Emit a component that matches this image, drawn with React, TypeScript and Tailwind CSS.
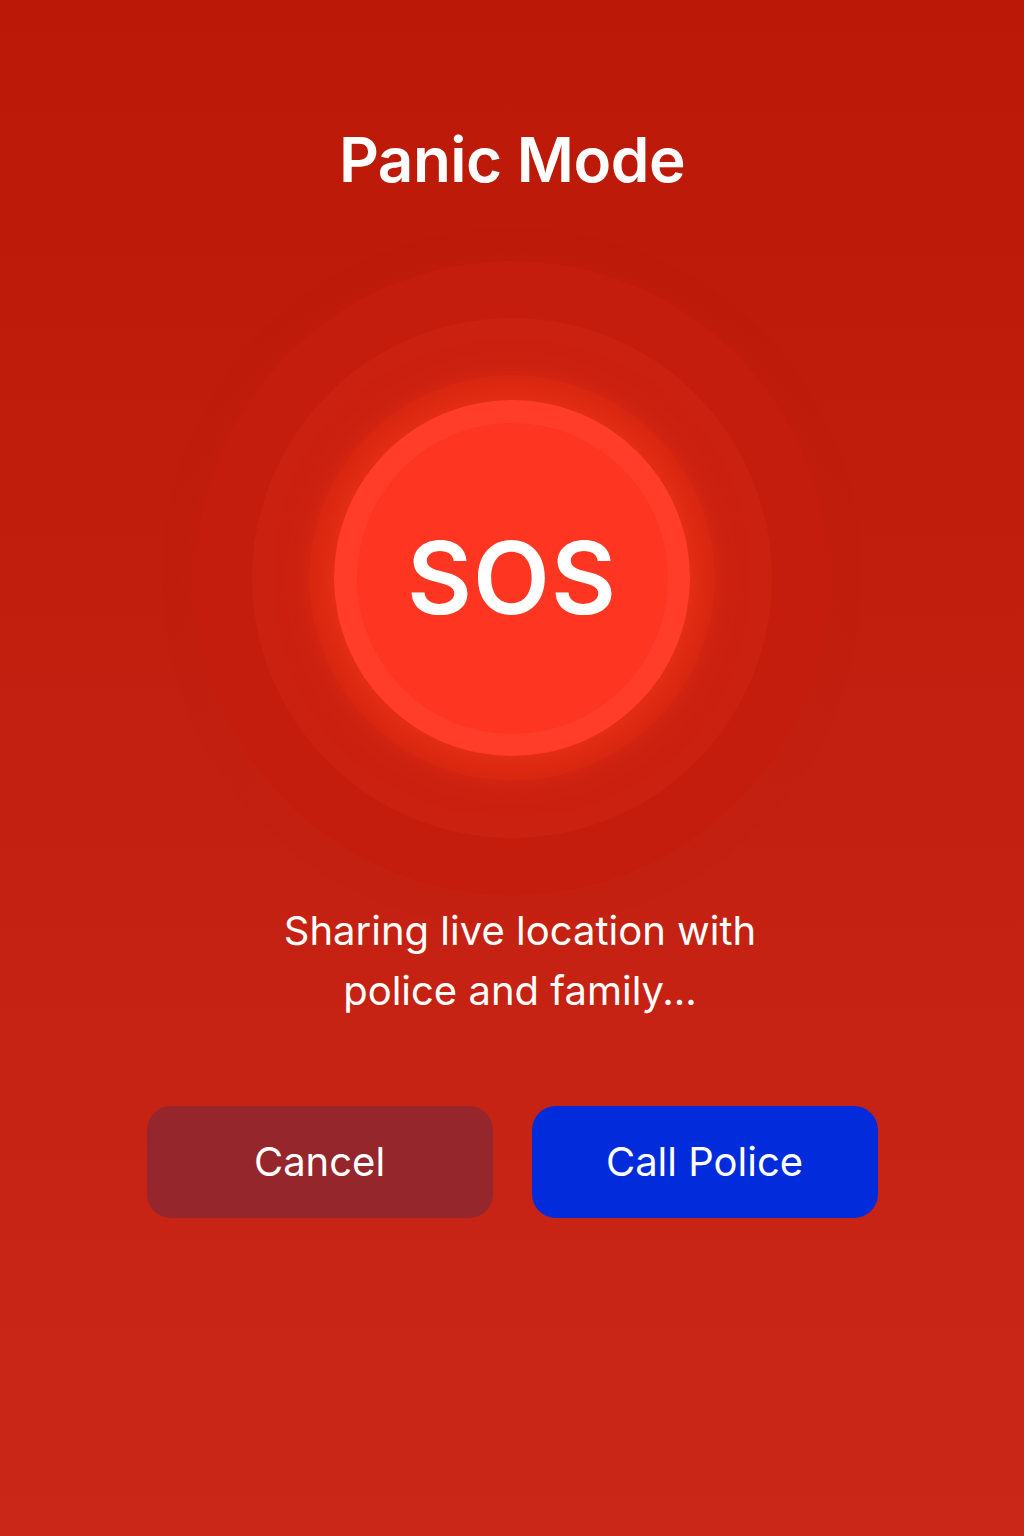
export default function App() {
  return (
    <div
      className="min-h-[1536px] w-full flex flex-col items-center bg-gradient-to-b from-[#bb1807] to-[#cb2718] text-white"
      style={{ fontFamily: "Inter, 'Liberation Sans', sans-serif" }}
    >
      <h1 className="mt-[125px] text-[62px] leading-[70px] font-semibold tracking-[-0.5px]">Panic Mode</h1>

      <div className="mt-[66px] w-[634px] h-[634px] rounded-full bg-[#c41d0d] flex items-center justify-center shadow-[0_0_30px_rgba(200,30,14,0.4)]">
        <div className="w-[520px] h-[520px] rounded-full bg-[#cb2110] flex items-center justify-center">
          <div className="w-[406px] h-[406px] rounded-full bg-[#d2240f] flex items-center justify-center">
            <button className="w-[356px] h-[356px] rounded-full bg-[#ff3d28] flex items-center justify-center shadow-[0_0_40px_12px_rgba(255,60,30,0.55)]">
              <div className="w-[311px] h-[311px] rounded-full bg-[#fd3521] flex items-center justify-center">
                <span className="text-[100px] font-semibold leading-none text-white tracking-[1px]">SOS</span>
              </div>
            </button>
          </div>
        </div>
      </div>

      <p className="mt-[6px] pl-[16px] text-[40px] leading-[60px] text-center font-normal">
        Sharing live location with
        <br />
        police and family...
      </p>

      <div className="mt-[85px] flex gap-[39px]">
        <button className="w-[346px] h-[112px] rounded-[24px] bg-[#95262c] text-[40px] text-white">Cancel</button>
        <button className="w-[346px] h-[112px] rounded-[24px] bg-[#022bdb] text-[40px] text-white">Call Police</button>
      </div>
    </div>
  )
}
